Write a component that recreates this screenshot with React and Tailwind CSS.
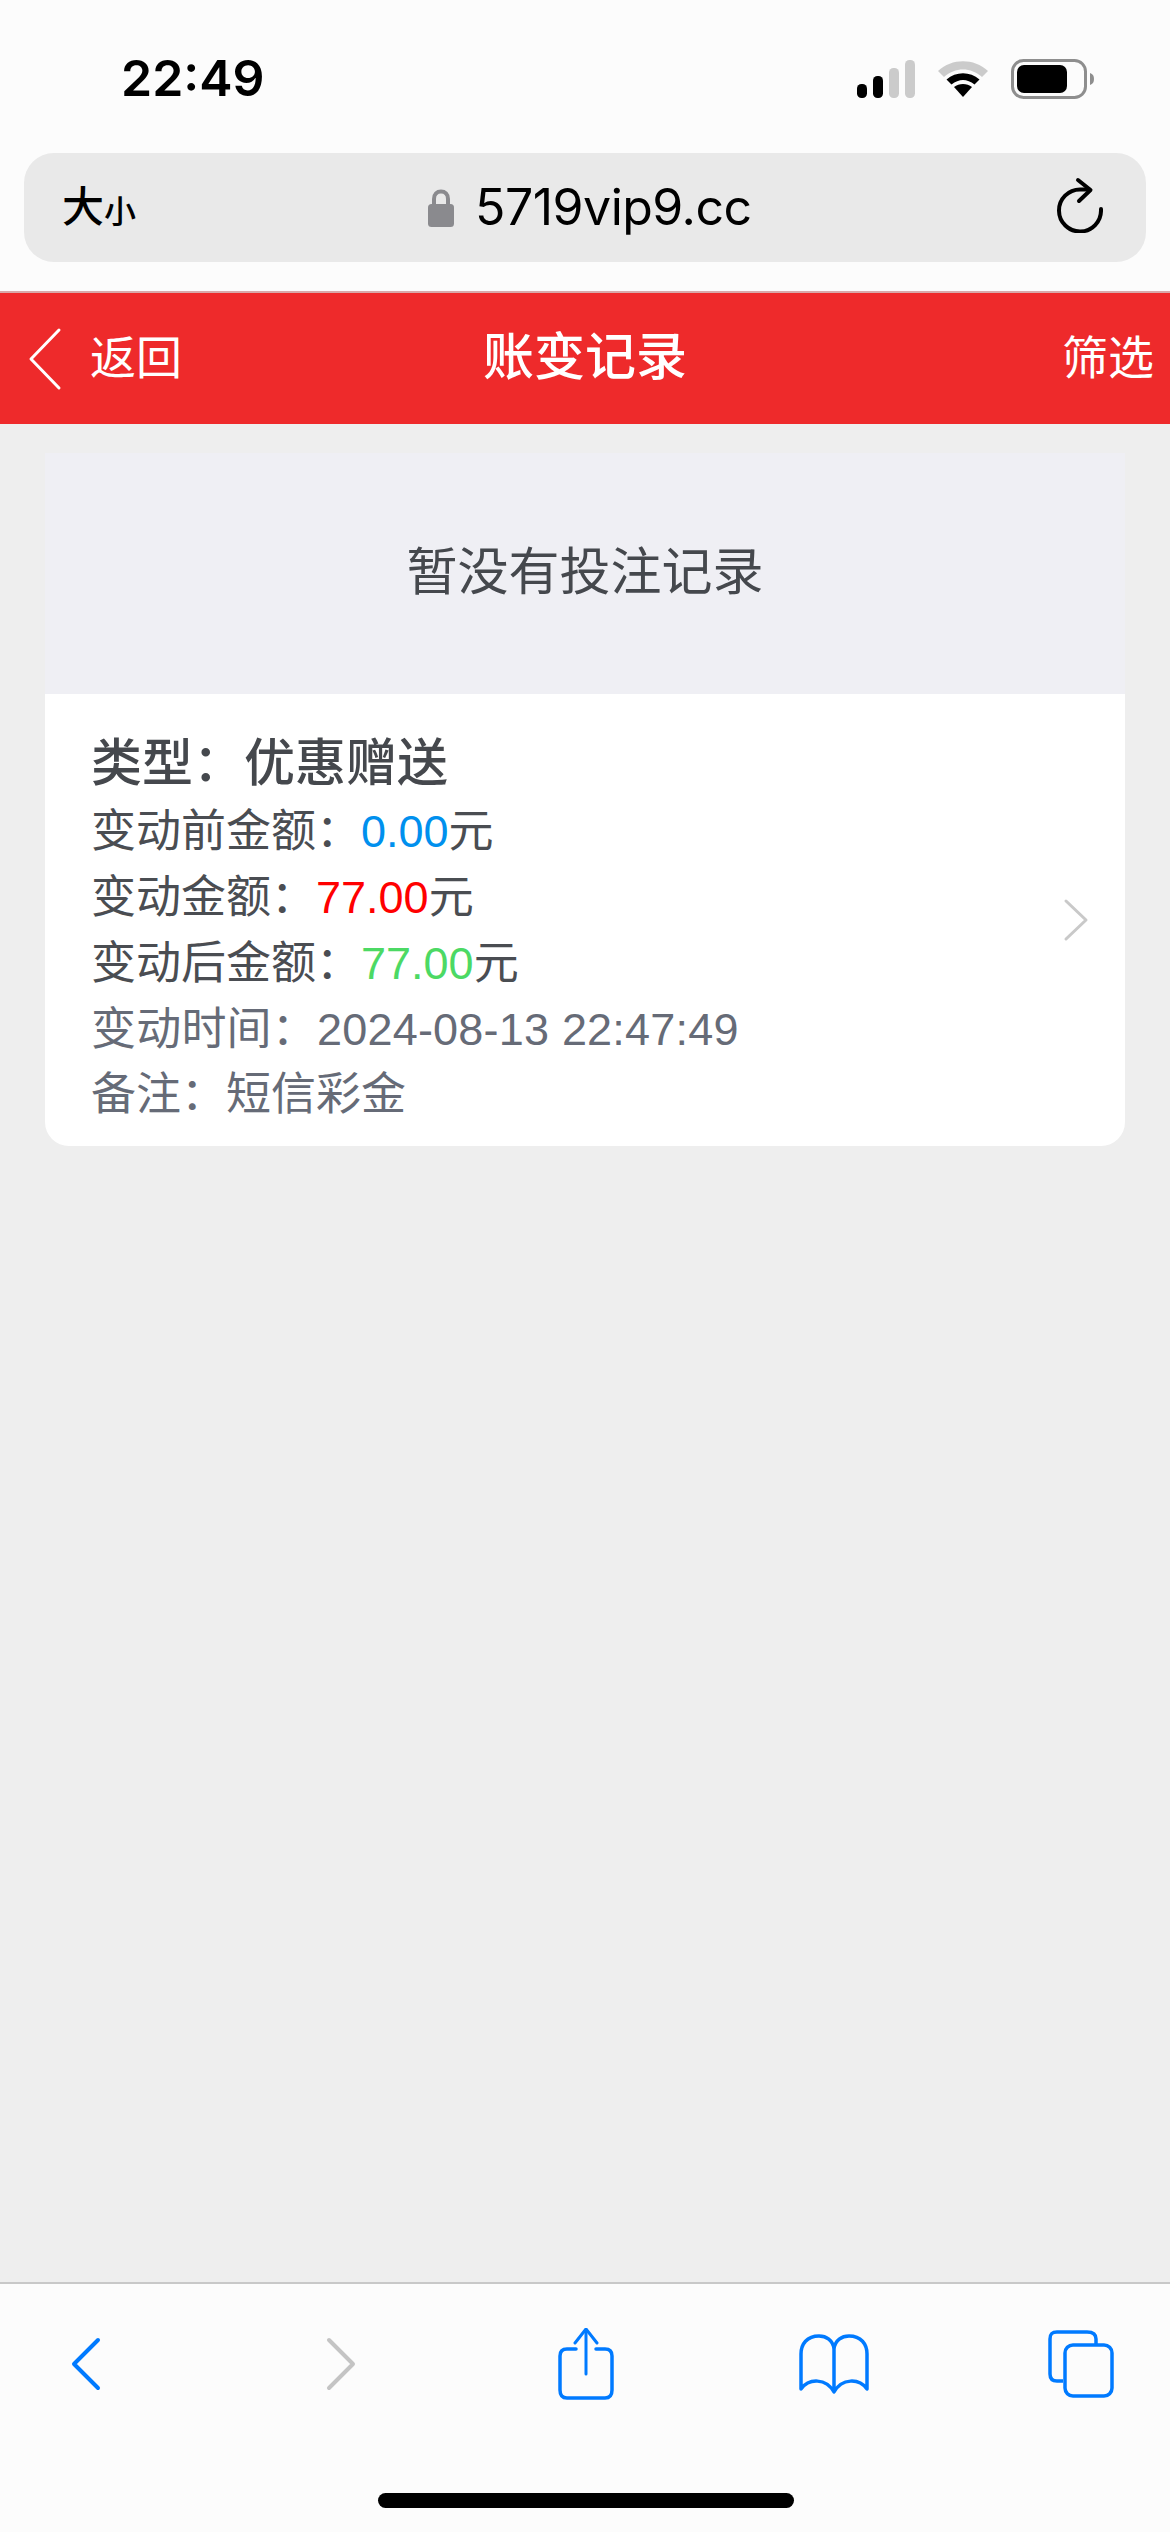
import React from 'react';

const cjk = 'font-["Liberation_Sans","Noto_Sans_CJK_SC",sans-serif]';

function Signal() {
  return (
    <svg width="58" height="38" viewBox="0 0 58 38">
      <rect x="0" y="24" width="10" height="14" rx="4.5" fill="#000" />
      <rect x="16" y="16" width="10" height="22" rx="4.5" fill="#000" />
      <rect x="32" y="8" width="10" height="30" rx="4.5" fill="#cbcbcb" />
      <rect x="48" y="0" width="10" height="38" rx="4.5" fill="#cbcbcb" />
    </svg>
  );
}

function Wifi() {
  return (
    <svg width="52" height="38" viewBox="0 0 52 38">
      <path d="M1 11 C15 -2 37 -2 51 11 L45 17 C34 7 18 7 7 17 Z" fill="#cbcbcb" />
      <path d="M9.500 19.500 C19 11 33 11 42.500 19.500 L37.500 24.500 C30 18.500 22 18.500 14.500 24.500 Z" fill="#000" />
      <path d="M17 27 C22 23 30 23 35 27 L26 37 Z" fill="#000" />
    </svg>
  );
}

function Battery() {
  return (
    <svg width="84" height="40" viewBox="0 0 84 40">
      <rect x="1.500" y="1.500" width="73" height="37" rx="11" fill="none" stroke="#8e8e8e" strokeWidth="3" />
      <rect x="6" y="6" width="50" height="28" rx="7" fill="#000" />
      <path d="M79 14 C82 15 83 17 83 20 C83 23 82 25 79 26 Z" fill="#8e8e8e" />
    </svg>
  );
}

function Reload() {
  return (
    <svg className="mb-[5px]" width="46" height="56" viewBox="0 0 46 56" fill="none" stroke="#000" strokeWidth="4" strokeLinecap="round" strokeLinejoin="round">
      <path d="M32 12.500 H23 A21 21 0 1 0 44 33 V32" />
      <path d="M21 3 L33.500 13 L22 24" />
    </svg>
  );
}

function Lock() {
  return (
    <svg width="26" height="38" viewBox="0 0 26 38">
      <path d="M6 17 V10 C6 5 9 2.500 13 2.500 C17 2.500 20 5 20 10 V17" fill="none" stroke="#8a8a8e" strokeWidth="4" />
      <rect x="0" y="15" width="26" height="23" rx="3.500" fill="#8a8a8e" />
    </svg>
  );
}

function Chevron({ left, w, h, color, sw }) {
  const d = left
    ? `M${w - sw} ${sw} L${sw} ${h / 2} L${w - sw} ${h - sw}`
    : `M${sw} ${sw} L${w - sw} ${h / 2} L${sw} ${h - sw}`;
  return (
    <svg width={w} height={h} viewBox={`0 0 ${w} ${h}`} fill="none" stroke={color} strokeWidth={sw} strokeLinecap="round" strokeLinejoin="round">
      <path d={d} />
    </svg>
  );
}

function Share() {
  return (
    <svg width="56" height="72" viewBox="0 0 56 72" fill="none" stroke="#007aff" strokeWidth="3.500" strokeLinecap="round" strokeLinejoin="round">
      <path d="M18 21 H9 C4 21 2 24 2 28 V62 C2 67 4 70 9 70 H47 C52 70 54 67 54 62 V28 C54 24 52 21 47 21 H38" />
      <path d="M28 46 V2" strokeWidth="3" />
      <path d="M17 15 L28 1 L39 15" strokeWidth="3" />
    </svg>
  );
}

function Book() {
  return (
    <svg width="70" height="60" viewBox="0 0 70 60" fill="none" stroke="#007aff" strokeWidth="3.500" strokeLinecap="round" strokeLinejoin="round">
      <path d="M35 15 C34 6 27 2 20 2 C8 2 2 10 2 20 V55 C10 44 27 44 35 58 C43 44 60 44 68 55 V20 C68 10 62 2 50 2 C43 2 36 6 35 15 V56" />
    </svg>
  );
}

function Tabs() {
  return (
    <svg width="66" height="68" viewBox="0 0 66 68" fill="none" stroke="#007aff" strokeWidth="3.500" strokeLinejoin="round">
      <path d="M15 51 H9 C4 51 2 48 2 44 V9 C2 4 4 2 9 2 H39 C45 2 48 4 48 9 V15" />
      <rect x="17" y="15" width="47" height="51" rx="8" />
    </svg>
  );
}

function Row({ label, value, color, unit }) {
  return (
    <div className="h-[66px] flex items-center text-[45px] text-[#4a4d52]">
      <span>{label}</span>
      <span className={color}>{value}</span>
      <span>{unit}</span>
    </div>
  );
}

export default function App() {
  return (
    <div className={`w-[1170px] h-[2532px] flex flex-col bg-[#eeeeee] overflow-hidden ${cjk}`}>
      {/* safari top */}
      <div className="h-[291px] shrink-0 bg-[#fcfcfc] flex flex-col">
        <div className="h-[153px] shrink-0 flex pt-[59px] pl-[121px] pr-[75px] justify-between items-start">
          <span className='font-["Inter",sans-serif] font-semibold text-[50px] leading-[38px] text-black'>22:49</span>
          <div className="flex items-center">
            <Signal />
            <div className="ml-[22px]"><Wifi /></div>
            <div className="ml-[22px]"><Battery /></div>
          </div>
        </div>
        <div className="mx-[24px] h-[109px] rounded-[30px] bg-[#e9e9e9] flex items-center relative pl-[38px] pr-[43px] justify-between">
          <div className="flex items-end text-black font-medium">
            <span className="text-[42px] leading-[44px]">大</span>
            <span className="text-[32px] leading-[36px]">小</span>
          </div>
          <div className="absolute left-[404px] top-0 h-full flex items-center">
            <Lock />
            <span className='ml-[21px] font-["Inter",sans-serif] text-[50px] text-black tracking-[-0.5px]'>5719vip9.cc</span>
          </div>
          <Reload />
        </div>
      </div>

      {/* red header */}
      <div className="h-[133px] shrink-0 bg-[#ee2a2b] border-t-2 border-[#d9a9a9] flex items-center justify-between pl-[28px] pr-[16px] relative text-white">
        <div className="flex items-center">
          <Chevron left w={34} h={64} color="#fff" sw={3} />
          <span className="ml-[28px] text-[46px]">返回</span>
        </div>
        <span className="absolute left-0 right-0 text-center text-[51px] font-medium">账变记录</span>
        <span className="text-[46px]">筛选</span>
      </div>

      {/* card */}
      <div className="mx-[45px] mt-[29px] rounded-b-[24px] overflow-hidden">
        <div className="h-[241px] bg-[#efeff4] flex items-center justify-center text-[51px] text-[#45484d]">
          暂没有投注记录
        </div>
        <div className="h-[452px] bg-white flex items-center justify-between pl-[46px] pr-[36px]">
          <div className="flex flex-col pt-[16px]">
            <div className="h-[70px] flex items-center text-[51px] font-medium text-[#45484d]">类型：优惠赠送</div>
            <Row label="变动前金额：" value="0.00" color="text-[#0090ee]" unit="元" />
            <Row label="变动金额：" value="77.00" color="text-[#ff0000]" unit="元" />
            <Row label="变动后金额：" value="77.00" color="text-[#4cd964]" unit="元" />
            <div className="h-[66px] flex items-center text-[45px] text-[#666b77] tracking-[0.2px]">变动时间：2024-08-13 22:47:49</div>
            <div className="h-[64px] flex items-center text-[45px] text-[#666b77]">备注：短信彩金</div>
          </div>
          <Chevron w={26} h={44} color="#c9c9c9" sw={3} />
        </div>
      </div>

      {/* safari bottom */}
      <div className="mt-auto h-[250px] shrink-0 bg-[#fcfcfc] border-t-2 border-[#c8c8c8] flex flex-col relative">
        <div className="flex items-center h-[112px] mt-[24px] pl-[70px]">
          <Chevron left w={32} h={56} color="#007aff" sw={4} />
          <div className="ml-[223px]"><Chevron w={32} h={56} color="#c4c4c4" sw={4} /></div>
          <div className="ml-[201px]"><Share /></div>
          <div className="ml-[185px]"><Book /></div>
          <div className="ml-[179px]"><Tabs /></div>
        </div>
        <div className="absolute left-[378px] bottom-[24px] w-[416px] h-[15px] rounded-full bg-black" />
      </div>
    </div>
  );
}
